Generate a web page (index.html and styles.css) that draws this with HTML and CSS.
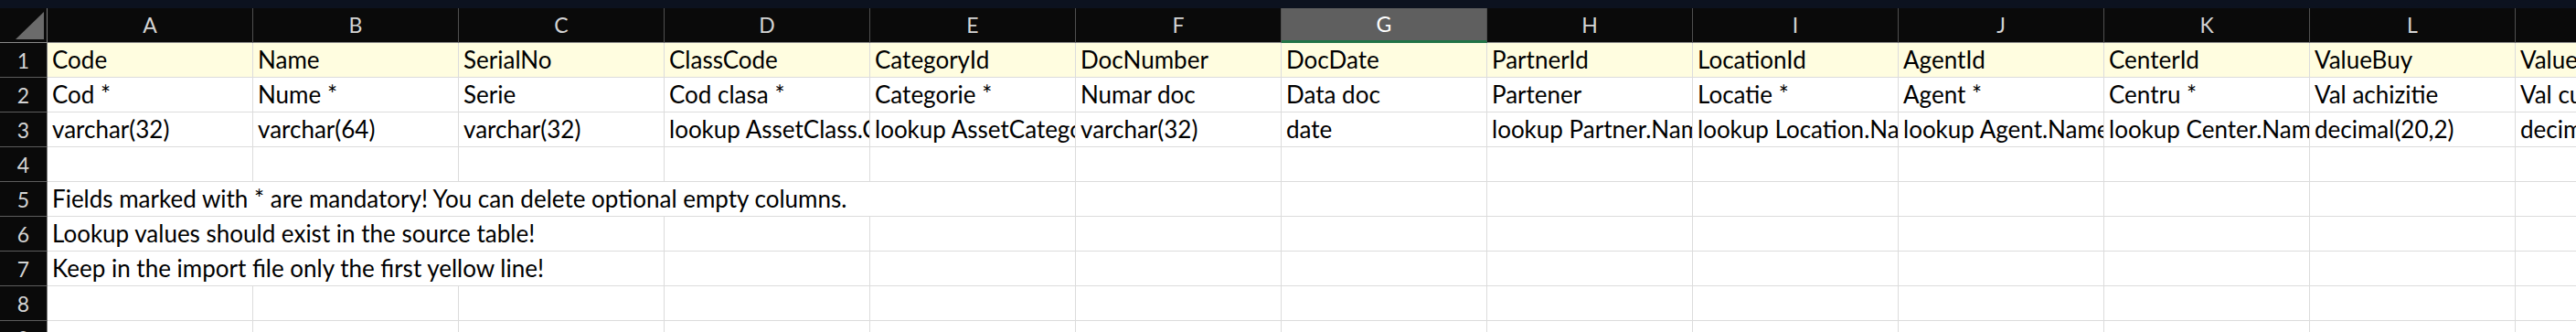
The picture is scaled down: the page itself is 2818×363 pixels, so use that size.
FILE: index.html
```html
<!DOCTYPE html>
<html lang="en">
<head>
<meta charset="utf-8">
<title>Asset import template</title>
<link rel="stylesheet" href="styles.css">
</head>
<body>
<div class="topbar"></div>
<div class="sheet">
  <div class="corner"><span class="tri"></span></div>
  <div class="colhead">A</div>
  <div class="colhead">B</div>
  <div class="colhead">C</div>
  <div class="colhead">D</div>
  <div class="colhead">E</div>
  <div class="colhead">F</div>
  <div class="colhead sel">G</div>
  <div class="colhead">H</div>
  <div class="colhead">I</div>
  <div class="colhead">J</div>
  <div class="colhead">K</div>
  <div class="colhead">L</div>
  <div class="colhead">M</div>

  <div class="rowhead">1</div>
  <div class="cell yellow">Code</div>
  <div class="cell yellow">Name</div>
  <div class="cell yellow">SerialNo</div>
  <div class="cell yellow">ClassCode</div>
  <div class="cell yellow">CategoryId</div>
  <div class="cell yellow">DocNumber</div>
  <div class="cell yellow">DocDate</div>
  <div class="cell yellow">PartnerId</div>
  <div class="cell yellow">LocationId</div>
  <div class="cell yellow">AgentId</div>
  <div class="cell yellow">CenterId</div>
  <div class="cell yellow">ValueBuy</div>
  <div class="cell yellow">ValueCurrent</div>

  <div class="rowhead">2</div>
  <div class="cell">Cod *</div>
  <div class="cell">Nume *</div>
  <div class="cell">Serie</div>
  <div class="cell">Cod clasa *</div>
  <div class="cell">Categorie *</div>
  <div class="cell">Numar doc</div>
  <div class="cell">Data doc</div>
  <div class="cell">Partener</div>
  <div class="cell">Locatie *</div>
  <div class="cell">Agent *</div>
  <div class="cell">Centru *</div>
  <div class="cell">Val achizitie</div>
  <div class="cell">Val curenta</div>

  <div class="rowhead">3</div>
  <div class="cell">varchar(32)</div>
  <div class="cell">varchar(64)</div>
  <div class="cell">varchar(32)</div>
  <div class="cell">lookup AssetClass.Code</div>
  <div class="cell">lookup AssetCategory.Name</div>
  <div class="cell">varchar(32)</div>
  <div class="cell">date</div>
  <div class="cell">lookup Partner.Name</div>
  <div class="cell">lookup Location.Name</div>
  <div class="cell">lookup Agent.Name</div>
  <div class="cell">lookup Center.Name</div>
  <div class="cell">decimal(20,2)</div>
  <div class="cell">decimal(20,2)</div>

  <div class="rowhead">4</div>
  <div class="cell"></div><div class="cell"></div><div class="cell"></div><div class="cell"></div>
  <div class="cell"></div><div class="cell"></div><div class="cell"></div><div class="cell"></div>
  <div class="cell"></div><div class="cell"></div><div class="cell"></div><div class="cell"></div>
  <div class="cell"></div>

  <div class="rowhead">5</div>
  <div class="cell span5">Fields marked with * are mandatory! You can delete optional empty columns.</div>
  <div class="cell"></div><div class="cell"></div><div class="cell"></div><div class="cell"></div>
  <div class="cell"></div><div class="cell"></div><div class="cell"></div><div class="cell"></div>

  <div class="rowhead">6</div>
  <div class="cell span3">Lookup values should exist in the source table!</div>
  <div class="cell"></div><div class="cell"></div><div class="cell"></div><div class="cell"></div>
  <div class="cell"></div><div class="cell"></div><div class="cell"></div><div class="cell"></div>
  <div class="cell"></div><div class="cell"></div>

  <div class="rowhead">7</div>
  <div class="cell span3">Keep in the import file only the first yellow line!</div>
  <div class="cell"></div><div class="cell"></div><div class="cell"></div><div class="cell"></div>
  <div class="cell"></div><div class="cell"></div><div class="cell"></div><div class="cell"></div>
  <div class="cell"></div><div class="cell"></div>

  <div class="rowhead">8</div>
  <div class="cell"></div><div class="cell"></div><div class="cell"></div><div class="cell"></div>
  <div class="cell"></div><div class="cell"></div><div class="cell"></div><div class="cell"></div>
  <div class="cell"></div><div class="cell"></div><div class="cell"></div><div class="cell"></div>
  <div class="cell"></div>

  <div class="rowhead">9</div>
  <div class="cell"></div><div class="cell"></div><div class="cell"></div><div class="cell"></div>
  <div class="cell"></div><div class="cell"></div><div class="cell"></div><div class="cell"></div>
  <div class="cell"></div><div class="cell"></div><div class="cell"></div><div class="cell"></div>
  <div class="cell"></div>
</div>
</body>
</html>
```

FILE: styles.css
```css
html, body {
  margin: 0;
  padding: 0;
  background: #ffffff;
  overflow: hidden;
}

body {
  width: 2818px;
  height: 363px;
  font-family: Lato, "Liberation Sans", sans-serif;
}

.topbar {
  height: 9px;
  background: #0c121f;
}

.sheet {
  display: grid;
  grid-template-columns: 52px repeat(13, 225px);
  grid-auto-rows: 38px;
  width: max-content;
}

.corner {
  background: #0a0a0a;
  border-right: 1px solid #7a7a7a;
  border-bottom: 1px solid #8a8a8a;
  position: relative;
}

.tri {
  position: absolute;
  left: 17px;
  top: 4px;
  width: 31px;
  height: 30px;
  background: #6b6b6b;
  clip-path: polygon(100% 0, 100% 100%, 0 100%);
}

.colhead {
  background: #0a0a0a;
  color: #d4d4d4;
  font-size: 23px;
  text-align: center;
  line-height: 37px;
  border-right: 1px solid #4f4f4f;
  border-bottom: 1px solid #8a8a8a;
}

.colhead.sel {
  background: #5f5f5f;
  color: #ffffff;
  border-bottom: 3px solid #217346;
  line-height: 35px;
}

.rowhead {
  background: #0a0a0a;
  color: #d4d4d4;
  font-size: 23px;
  text-align: center;
  line-height: 38px;
  border-right: 1px solid #7a7a7a;
  border-bottom: 1px solid #5c5c5c;
}

.cell {
  font-size: 26px;
  color: #000000;
  line-height: 37px;
  padding: 0 0 0 5px;
  white-space: nowrap;
  overflow: hidden;
  border-right: 1px solid #dcdcdc;
  border-bottom: 1px solid #dcdcdc;
  background: #ffffff;
}

.cell.yellow {
  background: #fffde0;
}

.span5 {
  grid-column: span 5;
  overflow: visible;
}

.span3 {
  grid-column: span 3;
}
```
